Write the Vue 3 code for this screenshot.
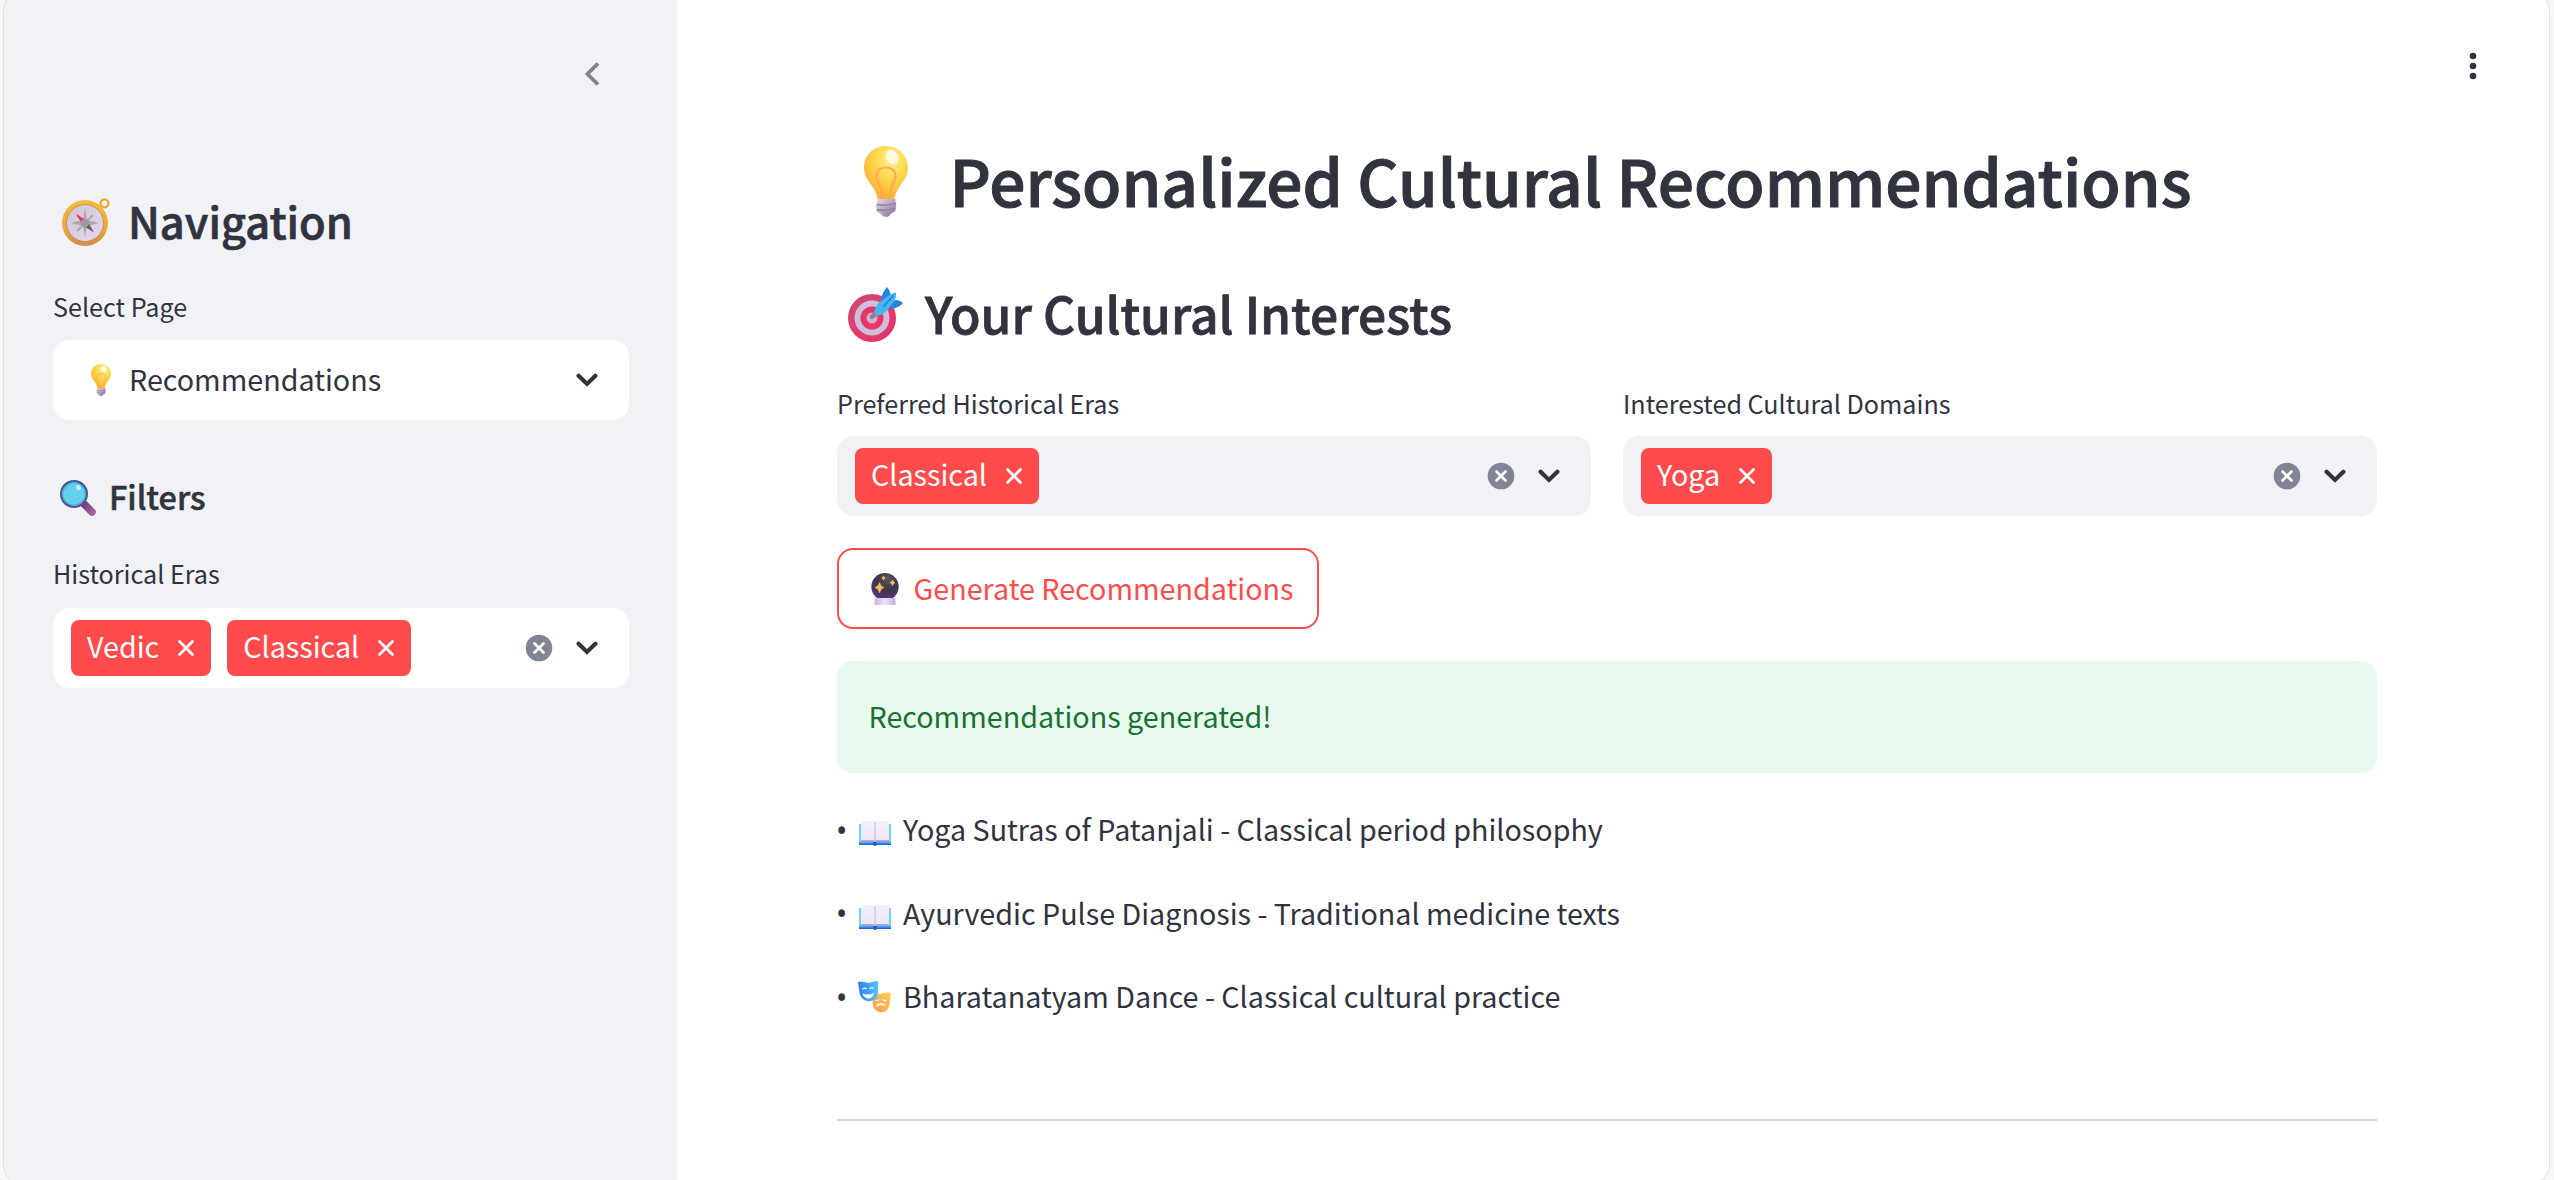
<script setup>
const sidebarTags = ['Vedic', 'Classical']
const fields = [
  { label: 'Preferred Historical Eras', tags: ['Classical'] },
  { label: 'Interested Cultural Domains', tags: ['Yoga'] }
]
const results = [
  { icon: 'book', text: 'Yoga Sutras of Patanjali - Classical period philosophy' },
  { icon: 'book', text: 'Ayurvedic Pulse Diagnosis - Traditional medicine texts' },
  { icon: 'masks', text: 'Bharatanatyam Dance - Classical cultural practice' }
]
</script>

<template>
  <div class="page">
    <svg class="sprite" width="0" height="0" aria-hidden="true">
      <defs>
        <radialGradient id="glass" cx=".62" cy=".25" r=".75">
          <stop offset="0" stop-color="#fff09a" /><stop offset=".45" stop-color="#ffd850" /><stop offset="1" stop-color="#ffb032" />
        </radialGradient>
        <linearGradient id="cap" x1="0" x2="1" y1="0" y2="1">
          <stop offset="0" stop-color="#e3dce8" /><stop offset=".5" stop-color="#b5a5bd" /><stop offset="1" stop-color="#8a62b4" />
        </linearGradient>
        <linearGradient id="gold" x1="0" x2="0" y1="0" y2="1">
          <stop offset="0" stop-color="#f7bd3a" /><stop offset=".6" stop-color="#eba63c" /><stop offset="1" stop-color="#d68a44" />
        </linearGradient>
        <linearGradient id="dial" x1="0" x2="1" y1="0" y2="1">
          <stop offset="0" stop-color="#cfc4d4" /><stop offset="1" stop-color="#e6d9ee" />
        </linearGradient>
        <linearGradient id="handle" x1="0" x2="1" y1="0" y2="1">
          <stop offset="0" stop-color="#6d3f78" /><stop offset="1" stop-color="#a8609f" />
        </linearGradient>
        <linearGradient id="rim" x1="0" x2="0" y1="0" y2="1">
          <stop offset="0" stop-color="#3c5c94" /><stop offset="1" stop-color="#6b4a86" />
        </linearGradient>
        <linearGradient id="ring" x1="0" x2="1" y1="0" y2="1">
          <stop offset="0" stop-color="#c94a78" /><stop offset=".6" stop-color="#ea3767" /><stop offset="1" stop-color="#d8356f" />
        </linearGradient>
        <radialGradient id="orb" cx=".6" cy=".2" r=".85">
          <stop offset="0" stop-color="#5b5660" /><stop offset=".45" stop-color="#3d3748" /><stop offset="1" stop-color="#5b3685" />
        </radialGradient>
        <linearGradient id="base" x1="0" x2="1">
          <stop offset="0" stop-color="#cdb0e2" /><stop offset=".5" stop-color="#efe4f6" /><stop offset="1" stop-color="#c7a8dc" />
        </linearGradient>
        <linearGradient id="happy" x1="0" x2="1">
          <stop offset="0" stop-color="#2f7ff5" /><stop offset="1" stop-color="#55c3fb" />
        </linearGradient>
        <linearGradient id="sad" x1="0" x2="1" y1="1" y2="0">
          <stop offset="0" stop-color="#ff9552" /><stop offset="1" stop-color="#ffd44e" />
        </linearGradient>
        <linearGradient id="paper" x1="0" x2="0" y1="0" y2="1">
          <stop offset="0" stop-color="#f4effa" /><stop offset="1" stop-color="#ebe4f6" />
        </linearGradient>
      </defs>
      <symbol id="bulb" viewBox="0 0 44 71">
        <path d="M22 0C9.500 0 0 9.500 0 21.500c0 8 4 13 8 18.500 3.500 5 5 9 6 14h16c1-5 2.500-9 6-14 4-5.500 8-10.500 8-18.500C44 9.500 34.500 0 22 0z" fill="url(#glass)" />
        <path d="M18.500 53c-.5-8-2-13-5-18.500C10.500 28 14 21.500 22 21.500S33.500 28 30.500 34.500c-3 5.500-4.500 10.500-5 18.500" fill="none" stroke="#ffab4a" stroke-width="2.200" />
        <ellipse cx="28" cy="11" rx="6" ry="7.500" fill="#fff" opacity=".75" transform="rotate(-25 28 11)" />
        <path d="M13.500 53h18v4l1 2-1 2v4l-5 3c-1 3.800-8 3.800-9 0l-5-2.500V62l-1-2 1-2z" fill="url(#cap)" />
        <path d="M13 58.500c6 1.500 13 .5 19-1.500M13 63.500c6 1.500 13 .5 19-1.500" fill="none" stroke="#8f7a9c" stroke-width="1.300" />
      </symbol>
      <symbol id="book" viewBox="0 0 32 25">
        <path d="M0 3h32v20.500H18q-2 2-4 0H0z" fill="#3da5f4" />
        <path d="M0 3h2v18H0zM30 3h2v18h-2z" fill="#6bd6fa" />
        <path d="M0 22.600h14q2 2 4 0h14v1.400H18q-2 2-4 0H0z" fill="#2867cf" />
        <path d="M1.500 18.500h29v2.300H18l-2 1-2-1H1.500z" fill="#b9a3d4" />
        <path d="M2 1q0-1 1-1h11q2 0 2 1.500Q16 0 18 0h11q1 0 1 1v18H18q-2 0-2 1 0-1-2-1H2z" fill="url(#paper)" />
        <path d="M16 1v19" stroke="#c6b9dc" stroke-width="1" />
        <path d="M14.300 21h3.400v2.500h-3.400z" fill="#1f57b8" />
      </symbol>
      <symbol id="masks" viewBox="0 0 33 32">
        <path d="M14.500 12.500q5 1.500 9 0 4-1.500 8-1 1.500.3 1.300 2l-1 9c-.8 6-4.800 9.500-9.300 8.800-4.500-.8-7.700-4.300-7.700-9.300z" fill="url(#sad)" />
        <path d="M17.500 26c1.500-4.500 8.500-5 10.500-.5-2.800-1.700-7.500-1.500-10.500.5z" fill="#fff" />
        <path d="M17.500 19.500q2.500.8 4-1.300M24.500 18.200q1.500 2 4 1.300" fill="none" stroke="#fff" stroke-width="1.100" />
        <path d="M0 2Q0 .3 1.500.5 6 1 10 1.800 14 1.500 18 0q2-.4 2 1.500v9c0 6-3.500 9.800-8.500 9.800S2.500 17 1.600 12z" fill="url(#happy)" />
        <path d="M4.500 12.500q6 2.500 11.500-.8c-.8 7-9.500 8-11.500.8z" fill="#fff" />
        <path d="M4.500 8.500q1.800-2.500 4-.6M11.500 8q2-2.500 4 0" fill="none" stroke="#fff" stroke-width="1.200" />
      </symbol>
      <symbol id="chevron" viewBox="0 0 22 14">
        <path d="M2.600 2.700 11 10.900l8.400-8.200" fill="none" stroke="#31333f" stroke-width="4.200" stroke-linejoin="miter" stroke-linecap="round" />
      </symbol>
      <symbol id="clear" viewBox="0 0 28 28">
        <circle cx="14" cy="14" r="13.300" fill="#808495" />
        <path d="M9.500 9.500l9 9m0-9l-9 9" stroke="#fff" stroke-width="2.700" stroke-linecap="round" />
      </symbol>
      <symbol id="cross" viewBox="0 0 16 16">
        <path d="M1.500 1.500l13 13M14.500 1.500l-13 13" stroke="#fff" stroke-width="2.700" stroke-linecap="round" />
      </symbol>
    </svg>

    <div class="frame">
      <aside class="sidebar">
        <div class="collapse">
          <svg width="16" height="24" viewBox="0 0 16 24"><path d="M14 1.500 3.500 12 14 22.500" fill="none" stroke="#7f828c" stroke-width="3.800" /></svg>
        </div>
        <h2 class="nav">
          <svg class="i-compass" width="48" height="48" viewBox="0 0 48 48">
            <circle cx="42.500" cy="5.300" r="4" fill="none" stroke="#eba92f" stroke-width="2.300" />
            <circle cx="23" cy="25" r="23" fill="url(#gold)" />
            <circle cx="23" cy="25" r="18.500" fill="url(#dial)" stroke="#c9873a" stroke-width=".8" />
            <path d="M23 11l2 11 12 3-12 3-2 11-2-11-12-3 12-3z" fill="#aaa6ae" />
            <path d="M15 17l5 6M31 17l-5 5M15 33l5-5" stroke="#aaa6ae" stroke-width="2" />
            <path d="M14 16l11.500 7-4.500 4.500z" fill="#f0305f" />
            <path d="M32 34.500l-11-7 4.500-4.500z" fill="#5f5d64" />
            <circle cx="23" cy="25" r="4.200" fill="#9d989f" />
          </svg>
          <span>Navigation</span>
        </h2>
        <div class="label page-label">Select Page</div>
        <div class="box white">
          <svg class="i-small-bulb" width="20" height="32"><use href="#bulb" /></svg>
          <span class="value">Recommendations</span>
          <svg class="chev" width="22" height="14"><use href="#chevron" /></svg>
        </div>
        <h3 class="filters">
          <svg class="i-search" width="36" height="36" viewBox="0 0 36 36">
            <path d="M24 24l8 8" stroke="url(#handle)" stroke-width="7.500" stroke-linecap="round" />
            <circle cx="14" cy="14" r="12.900" fill="#63d0ec" stroke="url(#rim)" stroke-width="2.200" />
            <circle cx="14" cy="14" r="11.200" fill="none" stroke="#3fb2e6" stroke-width="1.200" />
            <ellipse cx="18.500" cy="7.500" rx="2.300" ry="2.800" fill="#c4ecfb" transform="rotate(-30 18.500 7.500)" />
          </svg>
          <span>Filters</span>
        </h3>
        <div class="label">Historical Eras</div>
        <div class="box white tagbox">
          <span v-for="t in sidebarTags" :key="t" class="tag"><span>{{ t }}</span><svg width="16" height="16"><use href="#cross" /></svg></span>
          <svg class="clear" width="28" height="28"><use href="#clear" /></svg>
          <svg class="chev" width="22" height="14"><use href="#chevron" /></svg>
        </div>
      </aside>

      <main class="main">
        <svg class="kebab" width="8" height="28" viewBox="0 0 8 28">
          <circle cx="4" cy="4" r="3.300" fill="#31333f" /><circle cx="4" cy="14" r="3.300" fill="#31333f" /><circle cx="4" cy="24" r="3.300" fill="#31333f" />
        </svg>
        <h1 class="title">
          <svg class="i-bulb" width="44" height="71"><use href="#bulb" /></svg>
          <span>Personalized Cultural Recommendations</span>
        </h1>
        <h2 class="subtitle">
          <svg class="i-target" width="55" height="55" viewBox="0 0 55 55">
            <circle cx="24" cy="31" r="24" fill="url(#ring)" />
            <circle cx="24" cy="31" r="17.500" fill="#cbbfdc" />
            <circle cx="24" cy="31" r="11.500" fill="#e93564" />
            <circle cx="24" cy="31" r="5.500" fill="#c5b3d0" />
            <path d="M24 30l6-6" stroke="#8d7a97" stroke-width="4.500" stroke-linecap="round" />
            <path d="M33 16q0-10 6-16 4 5 3.500 10l-5 8zM40 20l7-7q5 0 8 3-4 5-12 6z" fill="#2583e3" />
            <path d="M27 22q3-7 9-10 7-6 12-6.500 1 6-3 10-5 8-11 12-5 2-7-.5-1.500-2 0-5z" fill="#45b4f3" />
            <path d="M36 19l9-10" stroke="#2480df" stroke-width="1.800" stroke-linecap="round" />
          </svg>
          <span>Your Cultural Interests</span>
        </h2>
        <div class="fields">
          <div v-for="f in fields" :key="f.label" class="field">
            <div class="label">{{ f.label }}</div>
            <div class="box grey tagbox">
              <span v-for="t in f.tags" :key="t" class="tag"><span>{{ t }}</span><svg width="16" height="16"><use href="#cross" /></svg></span>
              <svg class="clear" width="28" height="28"><use href="#clear" /></svg>
              <svg class="chev" width="22" height="14"><use href="#chevron" /></svg>
            </div>
          </div>
        </div>
        <button class="generate">
          <svg class="i-orb" width="28" height="32" viewBox="0 0 28 32">
            <circle cx="14" cy="13.700" r="13.700" fill="url(#orb)" />
            <path d="M4.500 25h19q.6 0 .7 1l.5 4.500q0 1.500-1.500 1.500H4.800q-1.500 0-1.500-1.500L3.800 26q.1-1 .7-1z" fill="url(#base)" />
            <path d="M8.500 9.500q.8 4.200 4.500 5-3.700.8-4.500 5.500-.8-4.700-4.500-5.500 3.700-.8 4.500-5zM21.500 7q.4 2.200 2.500 2.700-2.100.5-2.500 2.800-.4-2.300-2.500-2.800 2.100-.5 2.500-2.700zM12.500 3q.3 1.600 1.700 2-1.400.4-1.700 2-.3-1.600-1.700-2 1.400-.4 1.700-2z" fill="#ffbb5e" stroke="#ffbb5e" stroke-width=".7" />
          </svg>
          <span>Generate Recommendations</span>
        </button>
        <div class="alert"><span>Recommendations generated!</span></div>
        <div class="results">
          <div v-for="r in results" :key="r.text" class="result">
            <span class="dot">•</span>
            <svg v-if="r.icon === 'book'" class="i-book" width="32" height="25"><use href="#book" /></svg>
            <svg v-else class="i-masks" width="33" height="32"><use href="#masks" /></svg>
            <span>{{ r.text }}</span>
          </div>
        </div>
        <hr class="rule">
      </main>
    </div>
  </div>
</template>

<style>
body { margin: 0; background: #f8f8f8; }
</style>

<style scoped>
* { box-sizing: border-box; }
.page {
  height: 1180px;
  overflow: hidden;
  background: #f8f8f8;
  font-family: "Noto Sans CJK SC", "Noto Sans", sans-serif;
  font-size: 28.7px;
  color: #31333f;
}
.sprite { position: absolute; }
svg { display: block; flex: none; }
span { white-space: nowrap; }
h1, h2, h3 {
  margin: 0;
  font-weight: 500;
  display: flex;
  align-items: center;
  -webkit-text-stroke: .016em #31333f;
}
h1 svg, h2 svg, h3 svg { -webkit-text-stroke: 0; }
.frame {
  display: flex;
  height: 1190px;
  margin: -7px 5px 0 4px;
  border-radius: 18px;
  background: #fff;
  overflow: hidden;
  box-shadow: 0 0 0 1px #e2e2e2, 0 0 3px rgba(0, 0, 0, .08);
}
.sidebar {
  flex: none;
  width: 673px;
  padding: 7px 48px 0 49px;
  background: #f0f2f6;
}
.collapse { display: flex; justify-content: flex-end; padding: 62px 29px 0 0; height: 190px; }
.nav { height: 60px; line-height: 60px; font-size: 43.4px; }
.i-compass { margin: 4px 18px 0 9px; }
.label { height: 40px; line-height: 40px; font-size: 25.15px; }
.page-label { margin-top: 36px; }
.box { display: flex; align-items: center; height: 80px; border-radius: 16px; }
.label + .box { margin-top: 15px; }
.page-label + .box { margin-top: 14px; }
.white { background: #fff; }
.grey { background: #f0f2f6; }
.value { line-height: 78px; height: 80px; }
.i-small-bulb { margin: 0 18px 0 38px; }
.chev { margin: 0 31px 0 auto; }
.filters { height: 44px; line-height: 44px; font-size: 32.4px; margin: 54px 0 35px; }
.i-search { margin: 3px 13px 0 7px; }
.tagbox { padding-left: 18px; gap: 16px; }
.tag {
  display: flex;
  align-items: center;
  height: 56px;
  line-height: 52px;
  padding: 0 17px 0 16px;
  border-radius: 8px;
  background: #ff4b4b;
  color: #fff;
}
.tag span { height: 56px; }
.tag svg { margin-left: 19px; }
.clear { margin-left: auto; }
.clear + .chev { margin-left: 7px; }

.main { flex: 1; padding: 7px 172px 0 160px; }
.kebab { margin: 52px -100px 0 auto; }
.title { height: 88px; line-height: 88px; font-size: 64px; margin-top: 55px; }
.i-bulb { margin: 5px 41.5px 0 27px; }
.subtitle { height: 68px; line-height: 68px; font-size: 49.8px; margin-top: 55px; }
.i-target { margin: 5px 22px 0 11px; }
.fields { display: flex; gap: 32px; margin-top: 37px; }
.field { flex: 1; }
.field .label + .box { margin-top: 13px; }
.generate {
  display: flex;
  align-items: center;
  width: 482px;
  height: 81px;
  margin-top: 32px;
  padding: 0;
  border: 2px solid #ff4b4b;
  border-radius: 16px;
  background: #fff;
  color: #ff4b4b;
  font: inherit;
}
.generate span { line-height: 75px; height: 77px; }
.i-orb { margin: 0 14.5px 0 32px; }
.alert {
  height: 112px;
  line-height: 110px;
  margin-top: 32px;
  padding-left: 31.5px;
  border-radius: 16px;
  background: #e8f9ee;
  color: #177233;
}
.results { margin-top: 30px; }
.result { display: flex; align-items: center; height: 52px; line-height: 52px; margin-bottom: 31.5px; }
.dot { width: 22px; margin-left: -1px; margin-right: 1px; padding-top: 3px; font-family: "Noto Sans", sans-serif; font-size: 30px; }
.i-book { margin: 9px 12px 0 0; }
.i-masks { margin: 1px 12px 0 -1px; }
.rule { height: 2px; margin: 97px 0 0; border: 0; background: #d6d6d9; }
</style>
